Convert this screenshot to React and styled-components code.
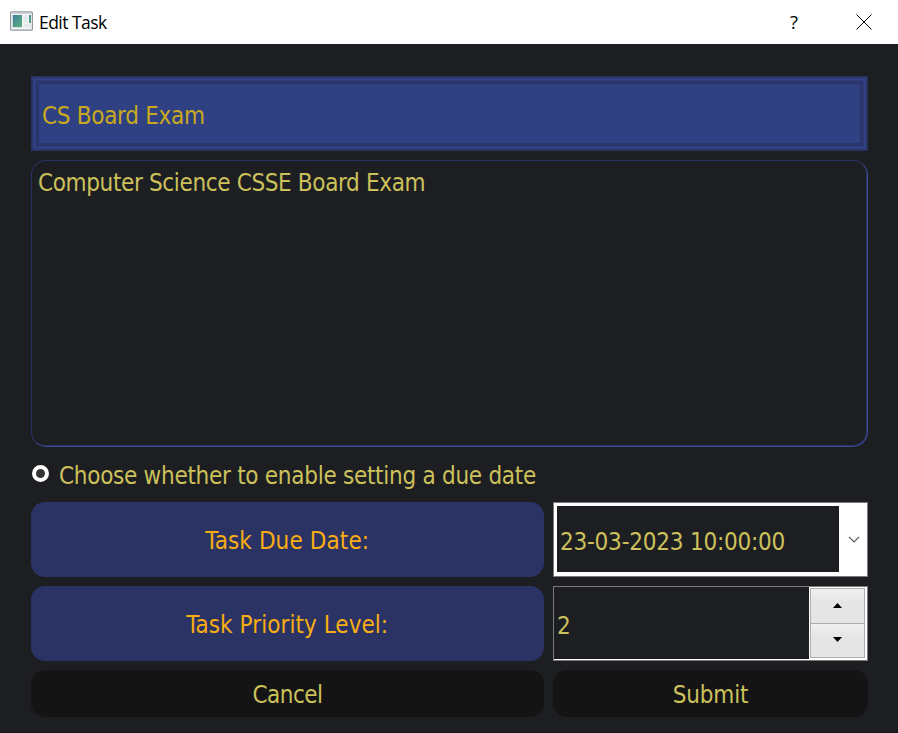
import React from "react";
import styled, { createGlobalStyle } from "styled-components";

const GlobalStyle = createGlobalStyle`
  * { box-sizing: border-box; }
  body { margin: 0; background: #1d1e22; }
`;

const Dialog = styled.div`
  width: 898px;
  height: 733px;
  display: flex;
  flex-direction: column;
  background: #1d1e22;
  border-bottom: 1px solid #151519;
  color: #ccc15b;
  font: 24px/30px "DejaVu Sans Condensed", "DejaVu Sans", sans-serif;
  font-stretch: condensed;
  overflow: hidden;
`;

const TitleBar = styled.header`
  height: 44px;
  flex: none;
  display: flex;
  align-items: center;
  padding: 0 25px 0 10px;
  background: #fff;
  color: #000;
  font: 17.5px/24px "Open Sans", "Noto Sans", sans-serif;
`;

const AppIcon = styled.svg`
  width: 23px;
  height: 20px;
  margin: -3px 6px 0 0;
`;

const Title = styled.span`
  flex: 1;
`;

const TitleButton = styled.span`
  width: 18px;
  height: 24px;
  margin: -1px 0 0 ${(p) => p.$gap || 0}px;
  display: flex;
  align-items: center;
  justify-content: center;
  font-size: 18.5px;
`;

const Text = styled.span`
  white-space: pre;
  letter-spacing: ${(p) => p.$track || 0}px;
`;

const Form = styled.main`
  display: flex;
  flex-direction: column;
  padding: 32px 30px 0 31px;
`;

const NameField = styled.div`
  height: 75px;
  border: 2px solid #2b3365;
  background: #2b3365;
  display: flex;
`;

const NameInner = styled.div`
  flex: 1;
  border: 3px solid #304183;
  display: flex;
`;

const NameValue = styled.div`
  flex: 1;
  display: flex;
  align-items: center;
  border: 3px solid #2b3569;
  background: #304183;
  color: #c8aa1c;
  padding: 5px 0 0 3px;
  box-shadow: 0 0 0 1px #2e3c79;
`;

const Description = styled.div`
  height: 287px;
  margin-top: 9px;
  padding: 7px 6px;
  border: 1px solid;
  border-color: #2b3365 #3c4b94 #3c4b94 #2b3365;
  border-radius: 15px;
  box-shadow: inset -1px -1px 0 #2b3365;
`;

const RadioRow = styled.div`
  height: 55px;
  display: flex;
  align-items: center;
  padding-top: 2px;
`;

const Radio = styled.span`
  width: 17px;
  height: 17px;
  margin: -5px 10px 0 1px;
  border: 4px solid #fff;
  border-radius: 50%;
  background: #333;
`;

const Grid = styled.div`
  display: grid;
  grid-template-columns: 513px 315px;
  grid-template-rows: 75px 75px 47px;
  gap: 9px;
`;

const Label = styled.div`
  display: flex;
  align-items: center;
  justify-content: center;
  padding-top: 3px;
  margin: 0 0.5px 0.5px 0;
  background: #2b3365;
  color: #f8ad12;
  border-radius: 14px;
`;

const Button = styled.button`
  display: flex;
  align-items: center;
  justify-content: center;
  padding: 2px 0 0;
  border: 0;
  border-radius: 14px;
  background: #141414;
  color: inherit;
  font: inherit;
`;

const Combo = styled.div`
  display: flex;
  border: 1px solid #7a7a7a;
  background: #fff;
  padding: 3px 0 4px 3px;
`;

const ComboValue = styled.div`
  width: 282px;
  display: flex;
  align-items: center;
  background: #1d1e22;
  padding: 6px 0 0 3px;
`;

const ComboArrow = styled.div`
  flex: 1;
  display: flex;
  align-items: center;
  justify-content: center;
  padding-left: 2px;
`;

const Spin = styled.div`
  display: flex;
  border: 1px solid #7a7a7a;
  background: #fff;
  padding-bottom: 1px;
`;

const SpinValue = styled.div`
  width: 255px;
  display: flex;
  align-items: center;
  background: #1d1e22;
  padding: 5px 0 0 3px;
`;

const SpinButtons = styled.div`
  width: 55px;
  height: 70px;
  margin: 1px 0 0 1px;
  display: grid;
  grid-template-rows: 34px 34px;
  border: 1px solid #adadad;
`;

const SpinButton = styled.div`
  display: flex;
  align-items: center;
  justify-content: center;
  padding-bottom: 2px;
  background: linear-gradient(#f0f0f0, #e5e5e5 40%);
  & + & { border-top: 1px solid #adadad; }
`;

export default function App() {
  return (
    <Dialog>
      <GlobalStyle />
      <TitleBar>
        <AppIcon viewBox="0 0 23 20">
          <defs>
            <linearGradient id="pane" x1="0" y1="0" x2="1" y2="1">
              <stop offset="0" stopColor="#417e9d" />
              <stop offset="1" stopColor="#5eb37e" />
            </linearGradient>
          </defs>
          <rect x=".6" y=".9" width="21.8" height="18.3" rx="1" fill="#f3f5f6" stroke="#929aa1" strokeWidth="1.2" />
          <path d="M1.5 2.5h20" stroke="#cbd2d8" />
          <rect x="2.8" y="4" width="9.2" height="12.2" fill="url(#pane)" />
          <rect x="13.7" y="4" width="4.2" height="7.5" fill="#e4e8e8" />
          <rect x="19" y="4" width="2" height="8" fill="url(#pane)" />
          <rect x="13.7" y="13" width="7.3" height="3.5" fill="#e8e9e9" />
        </AppIcon>
        <Title><Text $track={-0.55}>Edit Task</Text></Title>
        <TitleButton>?</TitleButton>
        <TitleButton $gap={52}>
          <svg width="16" height="16" viewBox="0 0 16 16">
            <path d="M.5 .5l15 15M15.5 .5l-15 15" stroke="#000" strokeWidth="1" />
          </svg>
        </TitleButton>
      </TitleBar>
      <Form>
        <NameField>
          <NameInner>
            <NameValue><Text $track={-0.3}>CS Board Exam</Text></NameValue>
          </NameInner>
        </NameField>
        <Description><Text $track={-0.36}>Computer Science CSSE Board Exam</Text></Description>
        <RadioRow>
          <Radio />
          <Text $track={-0.28}>Choose whether to enable setting a due date</Text>
        </RadioRow>
        <Grid>
          <Label><Text $track={0.1}>Task Due Date:</Text></Label>
          <Combo>
            <ComboValue><Text $track={-0.22}>23-03-2023 10:00:00</Text></ComboValue>
            <ComboArrow>
              <svg width="12" height="7" viewBox="0 0 12 7">
                <path d="M1 .8l5 5 5-5" fill="none" stroke="#555" strokeWidth="1.2" />
              </svg>
            </ComboArrow>
          </Combo>
          <Label><Text $track={0.05}>Task Priority Level:</Text></Label>
          <Spin>
            <SpinValue><Text>2</Text></SpinValue>
            <SpinButtons>
              <SpinButton>
                <svg width="9" height="5" viewBox="0 0 9 5"><path d="M0 5L4.5 0 9 5z" /></svg>
              </SpinButton>
              <SpinButton>
                <svg width="9" height="5" viewBox="0 0 9 5"><path d="M0 0L4.5 5 9 0z" /></svg>
              </SpinButton>
            </SpinButtons>
          </Spin>
          <Button><Text $track={-0.5}>Cancel</Text></Button>
          <Button><Text $track={-0.2}>Submit</Text></Button>
        </Grid>
      </Form>
    </Dialog>
  );
}
